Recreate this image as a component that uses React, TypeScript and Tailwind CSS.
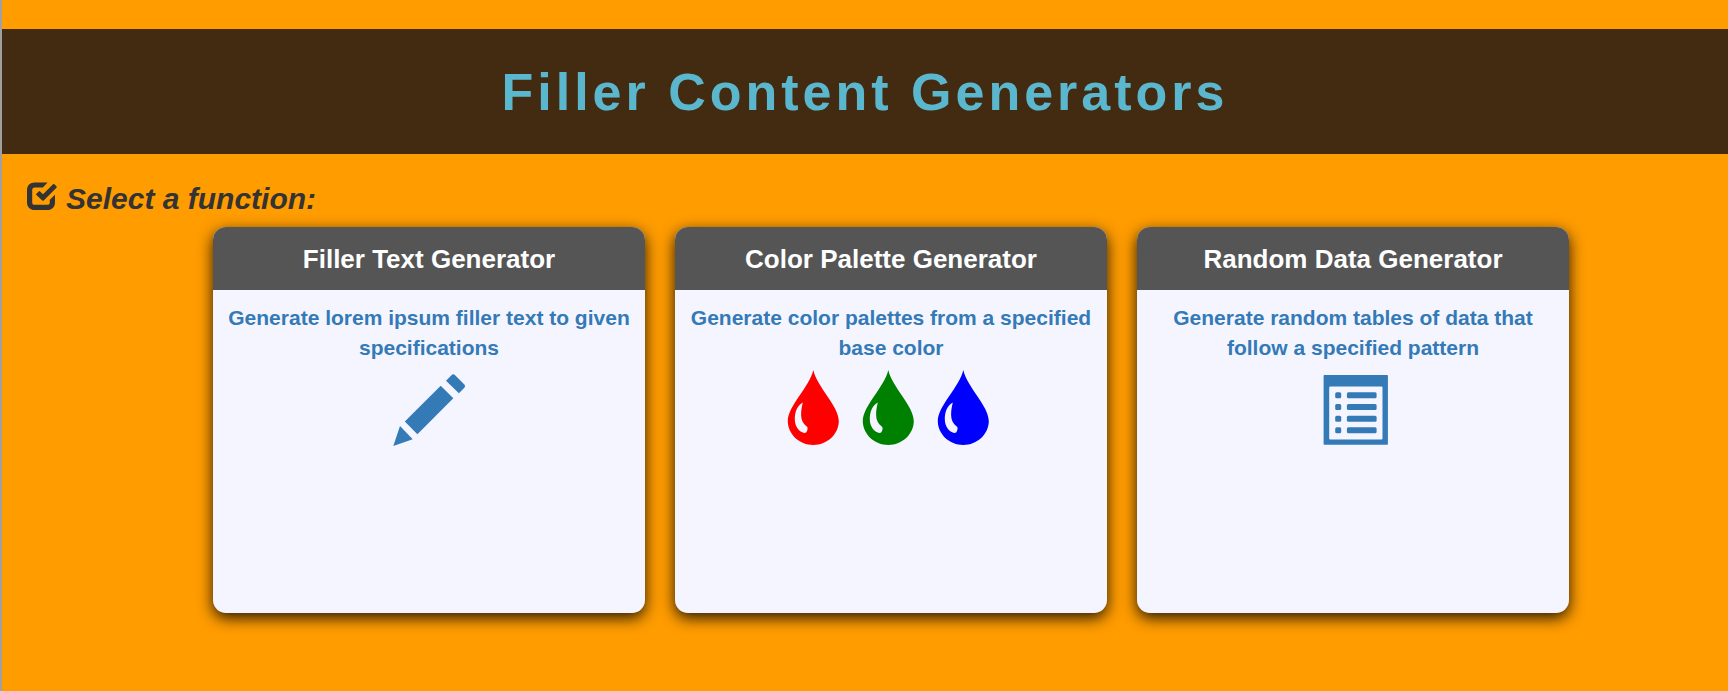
import type { ReactNode } from "react";

function CheckIcon() {
  return (
    <svg viewBox="0 0 30 30" className="size-[30px] shrink-0" fill="currentColor" aria-hidden="true">
      <path d="M20.600 .4H7.800C3 .4 0 3.400 0 8.200v12C0 25 3 28 7.800 28h12.400C25 28 28 25 28 20.200v-7.400l-5.200 5v2.400c0 1.800-.8 2.600-2.600 2.600H7.800c-1.800 0-2.600-.8-2.600-2.600v-12c0-1.800.8-2.600 2.600-2.600h8z" />
      <path d="M9.400 11.700l2.300-2.300q.7-.7 1.400 0l2.900 2.900L26 2.300q.7-.7 1.400 0l2 2q.7.700 0 1.400L16.700 18.400q-.7.7-1.400 0L9.400 13q-.7-.6 0-1.300z" />
    </svg>
  );
}

function PencilIcon() {
  return (
    <svg viewBox="0 0 75 75" className="size-[75px] overflow-visible" fill="currentColor" aria-hidden="true">
      <path d="M1.300 76L8 56l12.700 13.300z" />
      <path d="M48.700 15.700l12.600 12.600L25.400 64.200 12.800 51.600z" />
      <path d="M54 10.700l5.700-5.700q1.500-1.500 3.200 0l9.500 9.500q1.500 1.600 0 3.200l-5.500 5.500z" />
    </svg>
  );
}

function DropIcon({ className }: { className: string }) {
  return (
    <svg viewBox="0 0 75 75" className={className} fill="currentColor" fillRule="evenodd" aria-hidden="true">
      <path d="M34.300 0C38 17 59.800 36 59.800 51 59.800 64 48.300 75 34.300 75S8.800 64 8.800 51C8.800 36 30.500 17 34.300 0zM23.800 32.500C18.500 35 15.800 42 15.800 49c0 7 3.500 12.500 9.500 14 2.400.4 3.900-3.700 3-6-4.200-3-6.200-7-6.200-12 0-5 .7-8.500 1.700-12.500z" />
    </svg>
  );
}

function ListIcon() {
  const rows = [22.3, 34, 45.7, 57.3];
  return (
    <svg viewBox="0 0 75 75" className="size-[75px]" fill="currentColor" aria-hidden="true">
      <path
        fillRule="evenodd"
        d="M8.400 5h62.700q.8 0 .8.800v68.100q0 .8-.8.800H8.400q-.8 0-.8-.8V5.800Q7.600 5 8.400 5zM14.200 16.500q-1 0-1 1v50.900q0 1 1 1h51.300q1 0 1-1V17.500q0-1-1-1z"
      />
      {rows.map((y) => (
        <g key={y}>
          <rect x="19.200" y={y} width="6" height="6" rx="1.500" />
          <rect x="30.900" y={y} width="29.700" height="6" rx="1.500" />
        </g>
      ))}
    </svg>
  );
}

function GeneratorCard({ title, text, children }: { title: string; text: string; children: ReactNode }) {
  return (
    <li className="w-[25vw] shrink-0 overflow-hidden rounded-[13px] bg-[#f5f5ff] shadow-[0_5px_15px_rgba(0,0,0,0.85)]">
      <a href="#" className="block min-h-[386px] text-center font-bold text-[#337ab7]">
        <h3 className="bg-[#555] pt-[17px] pb-[15px] text-[26px] leading-[31px] text-white">{title}</h3>
        <p className="px-3 pt-[13px] text-[21px] leading-[30px]">{text}</p>
        <div className="mt-[7px] flex justify-center">{children}</div>
      </a>
    </li>
  );
}

export default function App() {
  return (
    <main className="min-h-screen border-l-2 border-[#a0a0a0] bg-[#ff9c00] pt-[29px] pb-10 font-['Liberation_Sans',Arial,sans-serif] text-[#333]">
      <header className="bg-[#422b10] pt-[33px] pb-[31px]">
        <h1 className="text-center text-[52px] leading-[61px] font-bold tracking-[4px] text-[#5bb7ce]">
          Filler Content Generators
        </h1>
      </header>
      <h2 className="mt-7 flex items-start gap-[9px] pl-[25px] text-[30px] leading-[33px] font-bold italic">
        <CheckIcon />
        Select a function:
      </h2>
      <ul className="mt-3 flex justify-center gap-[30px] pr-[13px] pl-[65px]">
        <GeneratorCard title="Filler Text Generator" text="Generate lorem ipsum filler text to given specifications">
          <PencilIcon />
        </GeneratorCard>
        <GeneratorCard title="Color Palette Generator" text="Generate color palettes from a specified base color">
          <DropIcon className="size-[75px] text-[#ff0000]" />
          <DropIcon className="size-[75px] text-[#008000]" />
          <DropIcon className="size-[75px] text-[#0000ff]" />
        </GeneratorCard>
        <GeneratorCard title="Random Data Generator" text="Generate random tables of data that follow a specified pattern">
          <ListIcon />
        </GeneratorCard>
      </ul>
    </main>
  );
}
